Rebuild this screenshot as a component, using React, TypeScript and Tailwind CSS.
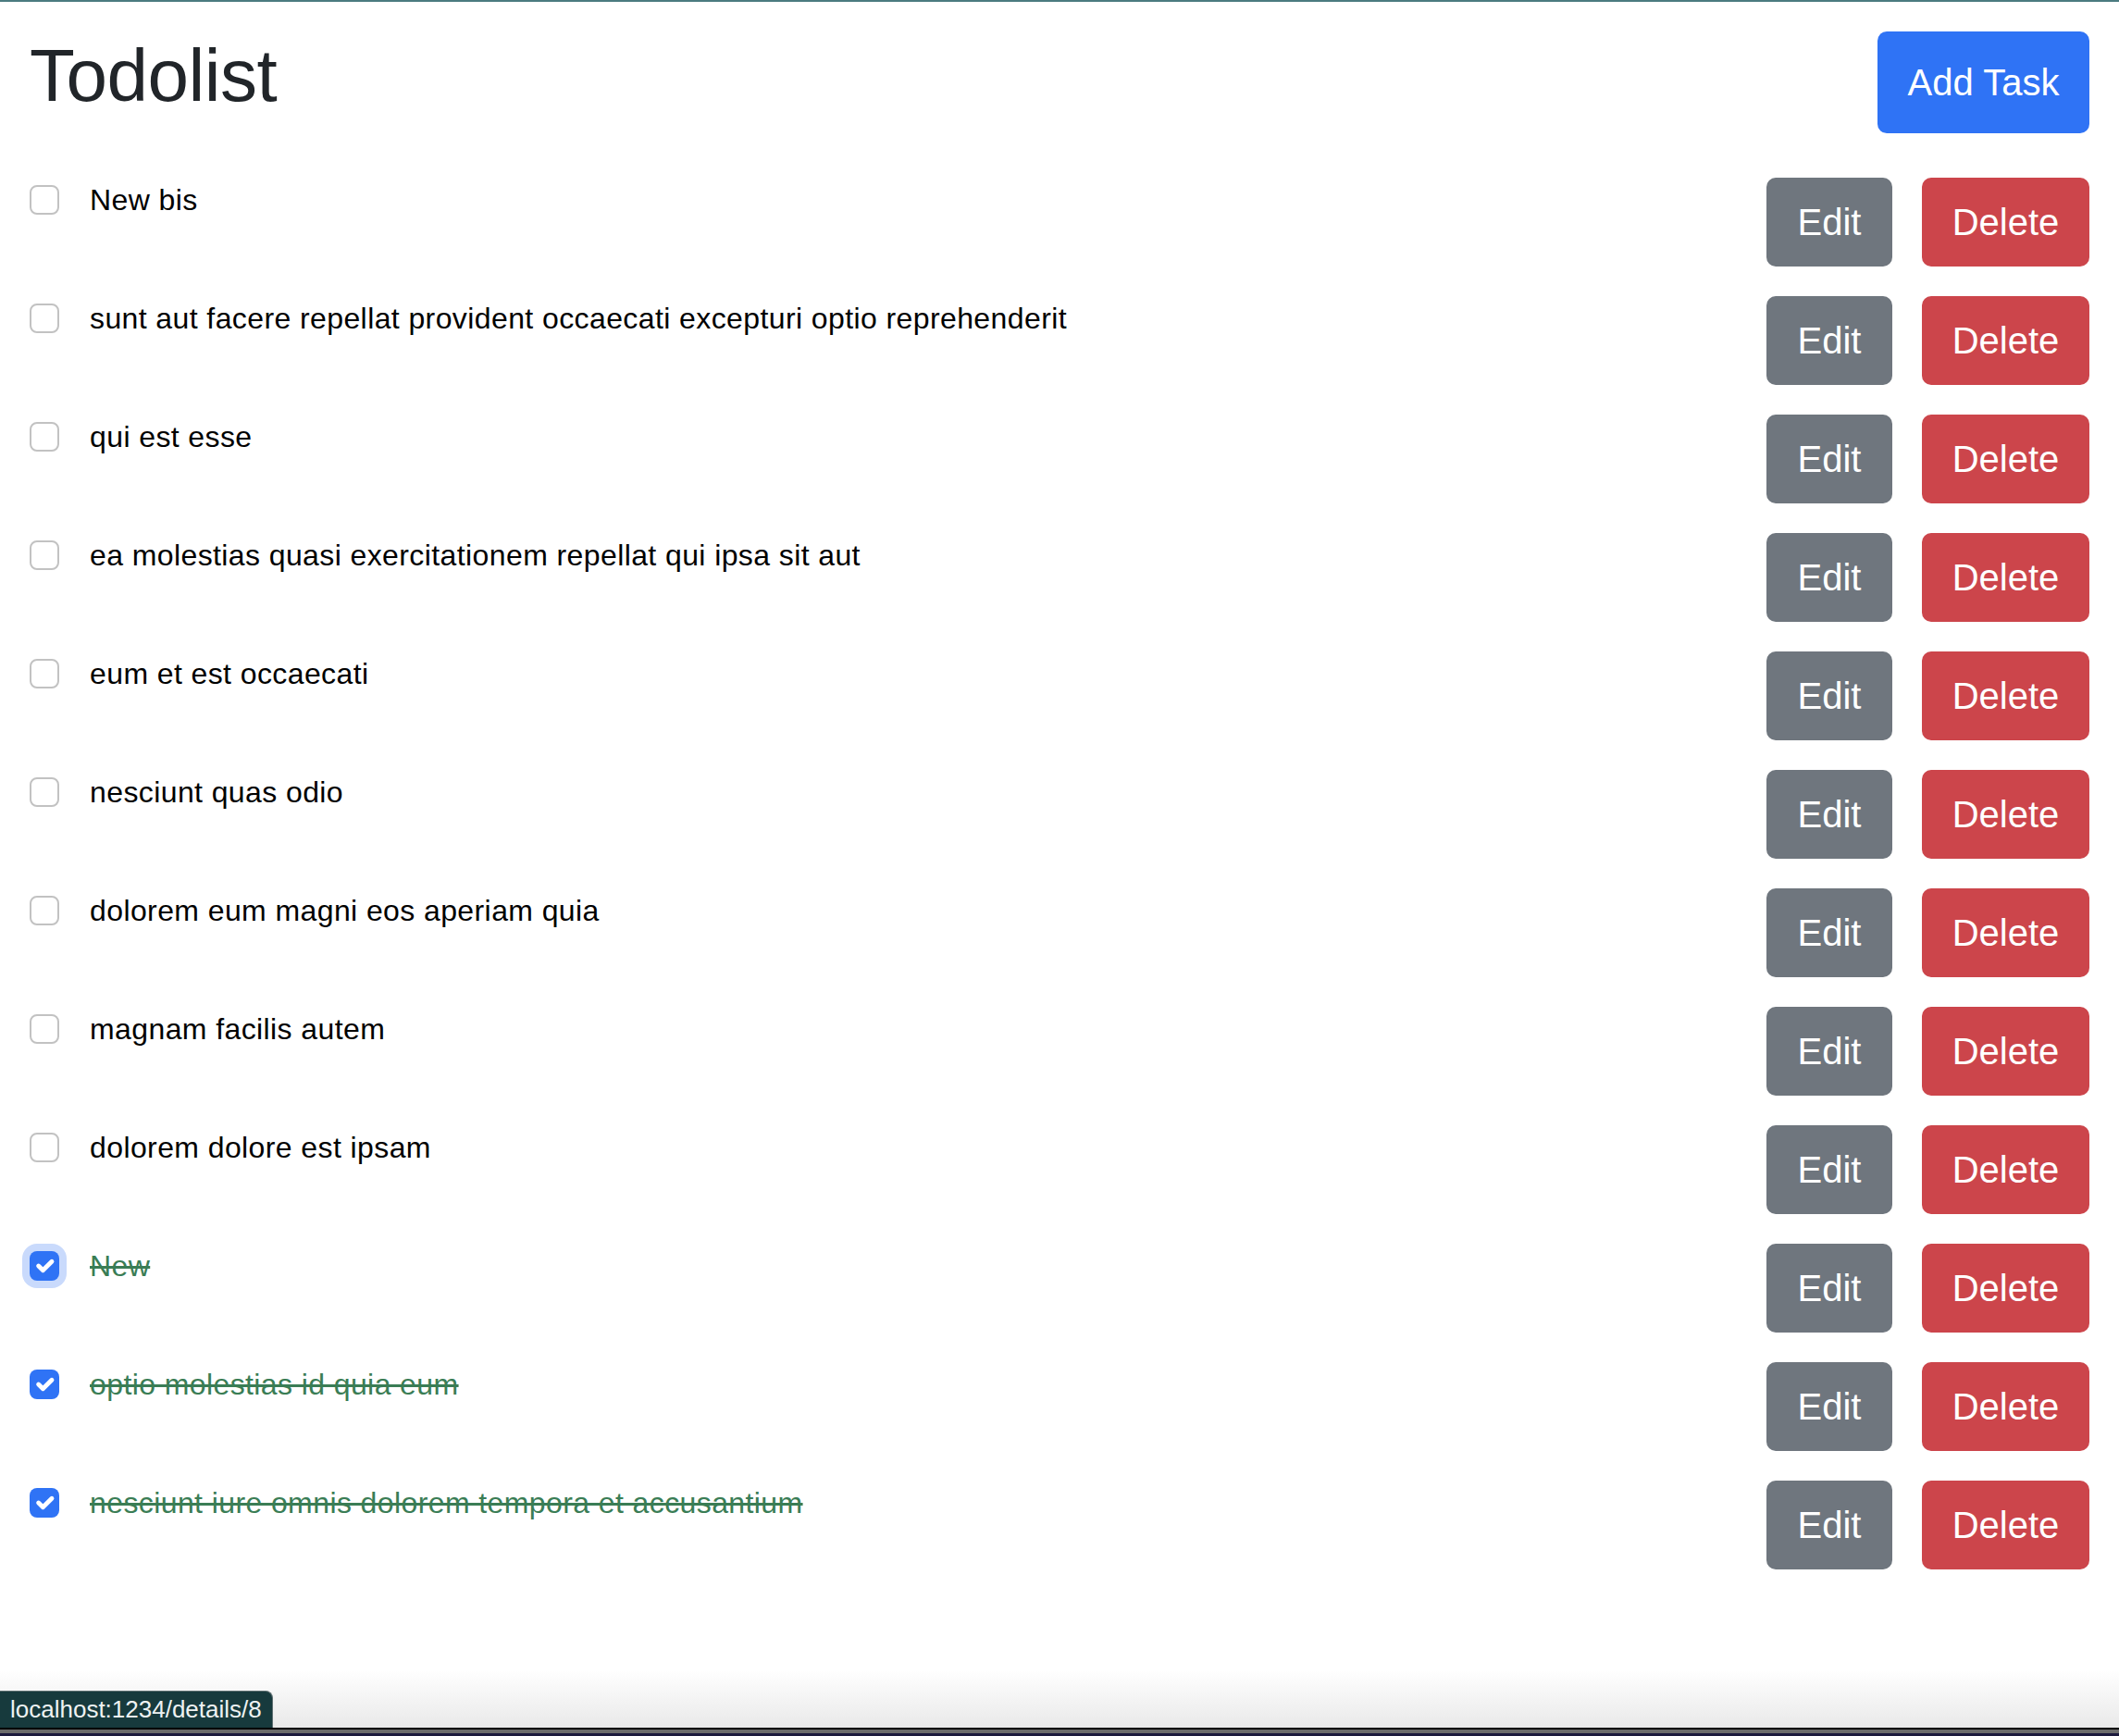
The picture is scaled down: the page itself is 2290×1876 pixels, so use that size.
const tasks = [
  { id: 1, title: "New bis", done: false },
  { id: 2, title: "sunt aut facere repellat provident occaecati excepturi optio reprehenderit", done: false },
  { id: 3, title: "qui est esse", done: false },
  { id: 4, title: "ea molestias quasi exercitationem repellat qui ipsa sit aut", done: false },
  { id: 5, title: "eum et est occaecati", done: false },
  { id: 6, title: "nesciunt quas odio", done: false },
  { id: 7, title: "dolorem eum magni eos aperiam quia", done: false },
  { id: 8, title: "magnam facilis autem", done: false },
  { id: 9, title: "dolorem dolore est ipsam", done: false },
  { id: 10, title: "New", done: true, focused: true },
  { id: 11, title: "optio molestias id quia eum", done: true },
  { id: 12, title: "nesciunt iure omnis dolorem tempora et accusantium", done: true },
];

function Checkbox({ checked, focused }: { checked: boolean; focused?: boolean }) {
  if (!checked) {
    return <span className="mt-2 block h-8 w-8 shrink-0 rounded-[8px] border-2 border-[#c2c2c2] bg-white" />;
  }
  return (
    <span
      className={
        focused
          ? "mt-2 flex h-8 w-8 shrink-0 items-center justify-center rounded-[8px] bg-[#2f73f5] shadow-[0_0_0_8px_#c9dafc]"
          : "mt-2 flex h-8 w-8 shrink-0 items-center justify-center rounded-[8px] bg-[#2f73f5]"
      }
    >
      <svg viewBox="0 0 20 20" className="h-8 w-8">
        <path d="M6 10l3 3l6-6" fill="none" stroke="#fff" strokeWidth="3" strokeLinecap="round" strokeLinejoin="round" />
      </svg>
    </span>
  );
}

export default function App() {
  return (
    <div className="flex h-[1876px] flex-col overflow-hidden border-t-2 border-[#4b7b80] bg-white font-['Liberation_Sans',Arial,sans-serif]">
      {/* header */}
      <div className="flex items-start justify-between px-8 pt-8">
        <h1 className="text-[80px] leading-[96px] font-medium tracking-[-0.5px] text-[#212529]">Todolist</h1>
        <button className="flex h-[110px] w-[229px] items-center justify-center rounded-[10px] bg-[#2f73f5] text-[40px] text-white">
          Add Task
        </button>
      </div>

      {/* tasks */}
      <div className="mt-12 flex flex-col gap-8 px-8">
        {tasks.map((t) => (
          <div key={t.id} className="flex items-start justify-between">
            <div className="flex items-start">
              <Checkbox checked={t.done} focused={t.focused} />
              <span
                className={
                  t.done
                    ? "ml-[33px] text-[32px] leading-[48px] tracking-[0.4px] text-[#3a7d55] line-through"
                    : "ml-[33px] text-[32px] leading-[48px] tracking-[0.4px] text-black"
                }
              >
                {t.title}
              </span>
            </div>
            <div className="flex gap-8">
              <button className="flex h-24 w-[136px] items-center justify-center rounded-[10px] bg-[#6f767e] text-[40px] text-white">
                Edit
              </button>
              <button className="flex h-24 w-[181px] items-center justify-center rounded-[10px] bg-[#cc454b] text-[40px] text-white">
                Delete
              </button>
            </div>
          </div>
        ))}
      </div>

      {/* status bar / window edge */}
      <div className="mt-auto">
        <div className="relative h-[62px] bg-linear-to-b from-white to-[#e9e9e9]">
          <div className="absolute bottom-0 left-0 flex h-10 w-[295px] items-center rounded-tr-[8px] border-t border-r border-[#5d6e70] bg-[#173a3d] pl-[11px] text-[26px] text-[#eef2f2]">
            localhost:1234/details/8
          </div>
        </div>
        <div className="h-[2px] bg-black" />
        <div className="h-1 bg-[#6b6b6b]" />
        <div className="h-[3px] bg-[#1c1a3d]" />
      </div>
    </div>
  );
}
